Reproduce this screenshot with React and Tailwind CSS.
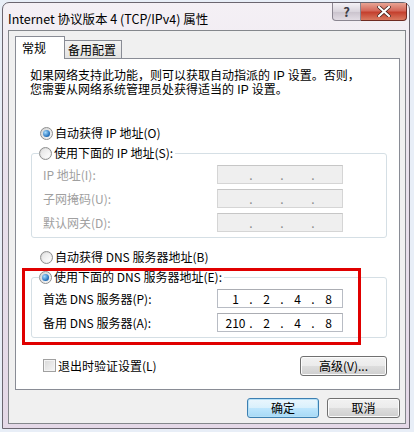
import React from 'react';

function Radio({ checked }) {
    return (
        <span className="flex h-[13px] w-[13px] shrink-0 items-center justify-center rounded-full border border-[#8e8f8f] bg-gradient-to-br from-[#d4d4d4] to-[#f8f8f8]">
            {checked ? (
                <span className="h-[7px] w-[7px] rounded-full bg-[radial-gradient(circle_at_35%_35%,#a6dcff,#1e6cb8_70%,#0d4a8a)]" />
            ) : (
                <span className="h-[9px] w-[9px] rounded-full bg-gradient-to-br from-[#e4e4e4] to-[#ffffff]" />
            )}
        </span>
    );
}

function IpBox({ values, disabled }) {
    const v = values || ['', '', '', ''];
    return (
        <div
            className={
                'flex h-[19px] w-[126px] items-center overflow-hidden border pl-[3px] text-[12px] leading-[17px] ' +
                (disabled
                    ? 'border-[#d5d5d5] border-t-[#c6c6c6] bg-[#efefef] text-[#8a8a8a]'
                    : 'border-[#b8bcc4] border-t-[#abadb3] bg-white text-black')
            }
        >
            {v.map((n, i) => (
                <React.Fragment key={i}>
                    <span className="w-[29px] shrink-0 text-center">{n}</span>
                    {i < 3 && <span className="flex w-[2px] shrink-0 justify-center">.</span>}
                </React.Fragment>
            ))}
        </div>
    );
}

function Field({ label, values, disabled }) {
    return (
        <div className="flex h-[19px] items-center pl-[11px]">
            <span className={'w-[174px] shrink-0 ' + (disabled ? 'text-[#a0a0a0]' : 'text-black')}>{label}</span>
            <IpBox values={values} disabled={disabled} />
        </div>
    );
}

function WinButton({ children, primary, className = '' }) {
    return (
        <button
            className={
                'flex h-[20px] items-center justify-center rounded-[3px] border text-[12px] text-black ' +
                (primary
                    ? 'border-[#3c7fb1] bg-[linear-gradient(#eaf6fd_0%,#d9f0fc_50%,#bee6fd_51%,#a7d9f5_100%)] shadow-[inset_0_0_0_1px_#b5e0f7]'
                    : 'border-[#707070] bg-[linear-gradient(#f2f2f2_0%,#ebebeb_50%,#dddddd_51%,#cfcfcf_100%)] shadow-[inset_0_0_0_1px_#fcfcfc]') +
                ' ' + className
            }
        >
            {children}
        </button>
    );
}

export default function App() {
    return (
        <div className="relative h-[432px] w-[414px] overflow-hidden bg-[#e8eef7] font-['Noto_Sans_CJK_SC',sans-serif] text-[12px] text-black">
            {/* Window frame */}
            <div className="ml-[2px] mt-[2px] flex h-[427px] w-[408px] flex-col rounded-t-[7px] border border-[#6b6670] bg-[linear-gradient(180deg,#f4f0f5_0%,#e9e1ec_40%,#e4d8e7_100%)]">
                {/* Title bar */}
                <div className="flex h-[27px] items-start justify-between">
                    <div className="pl-[5px] pt-[8px] text-[12.5px] leading-[16px] text-black">
                        Internet 协议版本 4 (TCP/IPv4) 属性
                    </div>
                    <div className="mr-[2px] flex">
                        <div className="flex h-[18px] w-[29px] items-center justify-center rounded-bl-[4px] border border-t-0 border-[#8a8590] bg-[linear-gradient(#f4f2f6,#d9d4dc_50%,#c9c2cc_51%,#e2dce4)] text-[13px] font-bold leading-none text-[#3c3c44]">
                            ?
                        </div>
                        <div className="flex h-[18px] w-[46px] items-center justify-center rounded-br-[4px] border border-l-0 border-t-0 border-[#6e2a22] bg-[linear-gradient(#e8a494,#d4685a_45%,#c4402e_55%,#d97a60)]">
                            <svg width="14" height="11" viewBox="0 0 14 11">
                                <path d="M2 1 L12 10 M12 1 L2 10" stroke="#3a1a14" strokeWidth="3.6" strokeLinecap="square" />
                                <path d="M2 1 L12 10 M12 1 L2 10" stroke="#ffffff" strokeWidth="2.2" strokeLinecap="square" />
                            </svg>
                        </div>
                    </div>
                </div>

                {/* Client area */}
                <div className="ml-[5px] mr-[3px] flex h-[394px] flex-col border border-[#84878c] bg-[#f0f0f0] pl-[6px] pt-[5px]">
                    {/* Tabs */}
                    <div className="flex items-end">
                        <div className="relative z-10 -mb-px h-[23px] w-[50px] border border-b-0 border-[#898c95] bg-white pl-[6px] pt-[3px] text-[12px] leading-[16px]">
                            常规
                        </div>
                        <div className="h-[18px] w-[57px] border-r border-t border-[#898c95] bg-[linear-gradient(#f2f2f2,#e3e3e3)] pl-[3px] text-[12px] leading-[17px]">
                            备用配置
                        </div>
                    </div>

                    {/* Tab panel */}
                    <div className="flex h-[332px] w-[385px] flex-col border border-[#898c95] bg-white">
                        <div className="mt-[10px] flex flex-col whitespace-nowrap pl-[14px] font-['Liberation_Sans','Noto_Sans_CJK_SC',sans-serif] leading-[14px]">
                            <span>如果网络支持此功能，则可以获取自动指派的 IP 设置。否则，</span>
                            <span>您需要从网络系统管理员处获得适当的 IP 设置。</span>
                        </div>

                        <div className="mt-[28px] flex h-[16px] items-center gap-[2px] pl-[24px]">
                            <Radio checked />
                            <span>自动获得 IP 地址(O)</span>
                        </div>

                        <fieldset className="ml-[15px] mt-[4px] w-[356px] rounded-[3px] border border-[#d5dfe5] pb-[5px]">
                            <legend className="ml-[7px] flex h-[16px] items-center gap-[2px] pr-[2px]">
                                <Radio />
                                <span>使用下面的 IP 地址(S):</span>
                            </legend>
                            <div className="mt-[4px] flex flex-col gap-[5px]">
                                <Field label="IP 地址(I):" disabled />
                                <Field label="子网掩码(U):" disabled />
                                <Field label="默认网关(D):" disabled />
                            </div>
                        </fieldset>

                        <div className="mt-[11px] flex h-[16px] items-center gap-[2px] pl-[24px]">
                            <Radio />
                            <span>自动获得 DNS 服务器地址(B)</span>
                        </div>

                        <fieldset className="ml-[15px] mt-[4px] w-[356px] rounded-[3px] border border-[#d5dfe5] pb-[5px]">
                            <legend className="ml-[7px] flex h-[16px] items-center gap-[2px] pr-[2px]">
                                <Radio checked />
                                <span>使用下面的 DNS 服务器地址(E):</span>
                            </legend>
                            <div className="mt-[4px] flex flex-col gap-[5px]">
                                <Field label="首选 DNS 服务器(P):" values={['1', '2', '4', '8']} />
                                <Field label="备用 DNS 服务器(A):" values={['210', '2', '4', '8']} />
                            </div>
                        </fieldset>

                        <div className="mt-[18px] flex h-[19px] items-center justify-between pl-[27px] pr-[12px]">
                            <div className="flex items-center gap-[2px]">
                                <span className="h-[13px] w-[13px] border border-[#a0a0a0] bg-[linear-gradient(135deg,#d8d8d8,#f6f6f6)] shadow-[inset_0_0_0_1px_#f4f4f4]" />
                                <span>退出时验证设置(L)</span>
                            </div>
                            <WinButton className="h-[19px] w-[87px]">高级(V)...</WinButton>
                        </div>
                    </div>

                    {/* Dialog buttons */}
                    <div className="mt-[8px] flex w-[385px] justify-end gap-[8px]">
                        <WinButton primary className="w-[72px]">确定</WinButton>
                        <WinButton className="w-[73px]">取消</WinButton>
                    </div>
                </div>
            </div>

            {/* Red annotation box */}
            <div className="pointer-events-none absolute left-[22px] top-[268px] h-[77px] w-[339px] border-[3px] border-[#e00000]" />
        </div>
    );
}
